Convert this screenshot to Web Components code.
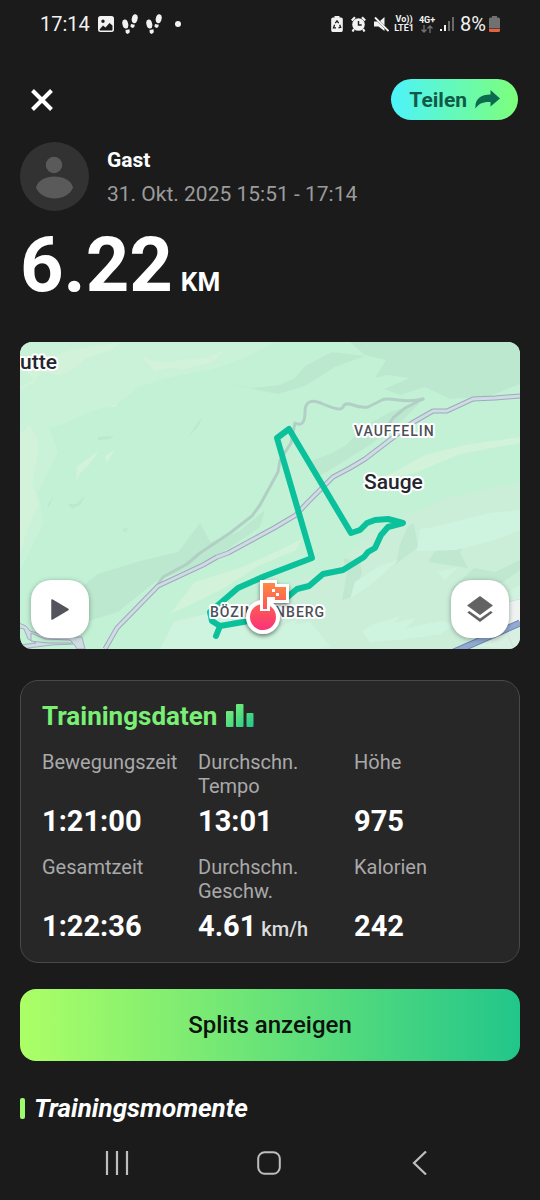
<!DOCTYPE html>
<html lang="de">
<head>
<meta charset="utf-8">
<meta name="viewport" content="width=device-width, initial-scale=1">
<title>Training</title>
<style>
body {
  background-color: #1b1b1b;
  color: #fff;
  font-family: Roboto, "Liberation Sans", sans-serif;
  margin: 0;
}
</style>
</head>
<body>
<workout-page></workout-page>

<script>
const icons = {
  image: [16, 16, `<path fill="#f2f2f2" fill-rule="evenodd" d="M2.5 0h11A2.5 2.5 0 0 1 16 2.500v11a2.500 2.500 0 0 1-2.500 2.500h-11A2.500 2.500 0 0 1 0 13.500v-11A2.500 2.500 0 0 1 2.500 0zM5 3.500a1.700 1.700 0 1 0 0 3.400 1.700 1.700 0 0 0 0-3.400zM1.500 13.500l.5 1h12l.5-1V9.500l-3-2.500-4 4.500L5 9.500z"/>`],
  steps: [16, 20, `<g fill="#f2f2f2"><ellipse cx="3.300" cy="10" rx="2.900" ry="4.600" transform="rotate(-12 3.300 10)"/><path d="M3.500 16l4-.8.3 3-2 1.700-2-1z"/><ellipse cx="12.700" cy="4.700" rx="2.900" ry="4.600" transform="rotate(12 12.700 4.700)"/><path d="M9 10l3.800.8-.6 2.500-2 .8-1.800-1.500z"/></g>`],
  dot: [6, 6, `<circle cx="3" cy="3" r="3" fill="#f2f2f2"/>`],
  saver: [12, 16, `<path fill="#f2f2f2" d="M3.500 0h5v1.500H10a1.800 1.800 0 0 1 1.800 1.800v11A1.700 1.700 0 0 1 10 16H2a1.700 1.700 0 0 1-1.800-1.700v-11A1.800 1.800 0 0 1 2 1.500h1.500z"/><path fill="none" stroke="#1b1b1b" stroke-width="1.300" d="M4.300 7.200L6 4.900l1.700 2.300M8.700 8.700l1 2.500-2.200.6M5 11.800H2.500l1.100-3"/>`],
  alarm: [15, 16, `<circle cx="7.500" cy="8.500" r="6.300" fill="#f2f2f2"/><path fill="none" stroke="#f2f2f2" stroke-width="2.200" d="M.8 4.500L4 1.300M14.200 4.500L11 1.300M3 13l-1.500 2.500M12 13l1.500 2.500"/><path fill="none" stroke="#1b1b1b" stroke-width="1.400" d="M7.500 5v4h3.200"/>`],
  mute: [15, 16, `<path fill="#f2f2f2" d="M10.500 1v8.500L6 5zM0 5.500h3.500l7 7V15L4.500 10.500H0z"/><path stroke="#f2f2f2" stroke-width="1.800" d="M1 1.500l13.500 13.500"/>`],
  arrows: [12, 8, `<path fill="none" stroke="#727272" stroke-width="1.300" d="M3 0v7M.5 4.500L3 7l2.500-2.500M9 8V1M6.500 3.500L9 1l2.500 2.500"/>`],
  signal: [15, 16, `<path fill="#f2f2f2" d="M0 13h2v2H0zM4 9h2v6H4z"/><path fill="#6a6a6a" d="M8 5h2v10H8zM12 1h2v14h-2z"/>`],
  battery: [11, 16, `<path fill="#717171" d="M3 0h5v1.500h1.500A1.500 1.500 0 0 1 11 3v9.500H0V3a1.500 1.500 0 0 1 1.500-1.500H3z"/><path fill="#e8603c" d="M0 13h11v1.500A1.500 1.500 0 0 1 9.500 16h-8A1.500 1.500 0 0 1 0 14.500z"/>`],
  close: [22, 22, `<path fill="none" stroke="#fff" stroke-width="4" d="M1.500 1.500l19 19M20.500 1.500l-19 19"/>`],
  share: [25, 19, `<path fill="#0c6b4f" d="M15.500 0L25 8.500l-9.500 8V12C8.500 11.500 3.500 13.500.5 18.500-.5 10 5 4.500 15.500 4.500z"/>`],
  avatar: [69, 69, `<circle cx="34.500" cy="34.500" r="34.500" fill="#323232"/><circle cx="34" cy="23" r="8.200" fill="#5a5a5a"/><path fill="#5a5a5a" d="M16 45.500C18 38 26 34.500 34.500 34.500S51 38 53 45.500C50 53 42 56.500 34.500 56.500S19 53 16 45.500z"/>`],
  play: [18, 21, `<path fill="#54545c" stroke="#54545c" stroke-width="1.500" stroke-linejoin="round" d="M1 1l16 9.500L1 20z"/>`],
  layers: [26, 26, `<path fill="#636363" d="M13 0l13 9.500L13 19 0 9.500zM2.300 15L13 22.500 23.700 15l2 1.500L13 26 .3 16.500z"/>`],
  bars: [28, 24, `<linearGradient id="g" x1="0" y1="0" x2="1" y2="1"><stop stop-color="#83f573"/><stop offset="1" stop-color="#22c68c"/></linearGradient><path fill="url(#g)" d="M1 7h5.500a1 1 0 0 1 1 1v14a1 1 0 0 1-1 1H1a1 1 0 0 1-1-1V8a1 1 0 0 1 1-1zM11 0h5.500a1 1 0 0 1 1 1v21a1 1 0 0 1-1 1H11a1 1 0 0 1-1-1V1a1 1 0 0 1 1-1zM21.500 9h5a1 1 0 0 1 1 1v12a1 1 0 0 1-1 1h-5a1 1 0 0 1-1-1V10a1 1 0 0 1 1-1z"/>`],
  recents: [24, 24, `<path stroke="#bebebe" stroke-width="2.200" d="M2 0v24M12 0v24M22 0v24"/>`],
  home: [24, 24, `<rect x="1.200" y="1.200" width="21.600" height="21.600" rx="6.500" fill="none" stroke="#bebebe" stroke-width="2"/>`],
  back: [24, 24, `<path fill="none" stroke="#bebebe" stroke-width="2.200" d="M18 .5L6 12l12 11.500"/>`]
};

class AppIcon extends HTMLElement {
  constructor () {
    super();
    this.attachShadow({ mode: 'open' });
  }

  connectedCallback() {
    const [w, h, shapes] = icons[this.getAttribute('name')];
    this.shadowRoot.innerHTML = `<style>
:host {
  display: block;
  flex: none;
}

svg {
  display: block;
}
</style>
<svg width="${w}" height="${h}" viewBox="0 0 ${w} ${h}" aria-hidden="true">${shapes}</svg>`;
  }
}

window.customElements.define('app-icon', AppIcon);

// Registers an element whose shadow root is a clone of static markup.
function define(name, html) {
  const template = document.createElement('template');
  template.innerHTML = html;
  window.customElements.define(name, class extends HTMLElement {
    constructor () {
      super();
      this.attachShadow({ mode: 'open' });
      this.shadowRoot.appendChild(template.content.cloneNode(true));
    }
  });
}

define('status-bar', `<style>
:host {
  align-items: center;
  color: #f2f2f2;
  display: flex;
  font-size: 20px;
  height: 48px;
  justify-content: space-between;
  padding: 0 40px;
}

.group {
  align-items: center;
  display: flex;
  gap: 8px;
}

.dot {
  margin-left: 5px;
}

.net {
  align-items: center;
  display: flex;
  flex-direction: column;
  font-size: 9px;
  font-weight: 700;
  line-height: 9px;
}

.right {
  gap: 5px;
}

.charge {
  align-items: center;
  display: flex;
  gap: 3px;
}
</style>
<div class="group">
  <span>17:14</span>
  <app-icon name="image"></app-icon>
  <app-icon name="steps"></app-icon>
  <app-icon name="steps"></app-icon>
  <app-icon class="dot" name="dot"></app-icon>
</div>
<div class="group right">
  <div class="group">
    <app-icon name="saver"></app-icon>
    <app-icon name="alarm"></app-icon>
    <app-icon name="mute"></app-icon>
  </div>
  <div class="net"><span>Vo))</span><span>LTE1</span></div>
  <div class="net"><span>4G+</span><app-icon name="arrows"></app-icon></div>
  <app-icon name="signal"></app-icon>
  <div class="charge"><span>8%</span><app-icon name="battery"></app-icon></div>
</div>`);

define('top-bar', `<style>
:host {
  align-items: center;
  display: flex;
  justify-content: space-between;
}

button {
  background: none;
  border: 0;
  color: inherit;
  font: inherit;
  margin: 0;
  padding: 0;
}

.close {
  padding: 9px 11px;
}

.share {
  align-items: center;
  background: linear-gradient(90deg, #4df3fa, #7dff7a);
  border-radius: 21px;
  color: #115a48;
  display: flex;
  font-size: 21px;
  font-weight: 700;
  gap: 8px;
  height: 41px;
  padding: 0 18px;
}
</style>
<button class="close" aria-label="Schließen"><app-icon name="close"></app-icon></button>
<button class="share">Teilen<app-icon name="share"></app-icon></button>`);

define('user-info', `<style>
:host {
  display: flex;
  gap: 18px;
}

.text {
  display: flex;
  flex-direction: column;
  gap: 10px;
  padding-top: 6px;
}

.name {
  font-size: 21px;
  font-weight: 700;
  line-height: 24px;
}

.date {
  color: #9b9b9b;
  font-size: 21px;
  line-height: 24px;
}
</style>
<app-icon name="avatar"></app-icon>
<div class="text">
  <div class="name"><slot></slot></div>
  <div class="date"><slot name="date"></slot></div>
</div>`);

define('workout-distance', `<style>
:host {
  align-items: baseline;
  display: flex;
  font-size: 76px;
  font-weight: 700;
  gap: 8px;
  line-height: 80px;
}

.unit {
  font-size: 26px;
}
</style>
<span><slot></slot></span>
<span class="unit"><slot name="unit"></slot></span>`);

define('route-map', `<style>
:host {
  border-radius: 12px;
  display: block;
  overflow: hidden;
  position: relative;
}

.map {
  display: block;
  height: auto;
  width: 100%;
}

text {
  fill: #4c4f58;
  font-size: 14px;
  font-weight: 500;
  letter-spacing: 1px;
  paint-order: stroke;
  stroke: #fff;
  stroke-linejoin: round;
  stroke-width: 4px;
}

.town {
  fill: #24262e;
  font-size: 21px;
  letter-spacing: normal;
}

button {
  align-items: center;
  background-color: #fff;
  border: 0;
  border-radius: 20px;
  bottom: 11px;
  box-shadow: 0 1px 5px rgba(0, 0, 0, .35);
  display: flex;
  height: 58px;
  justify-content: center;
  padding: 0;
  position: absolute;
  width: 58px;
}

.play {
  left: 11px;
}

.layers {
  right: 11px;
}
</style>
<svg class="map" viewBox="0 0 500 307" role="img" aria-label="Route">
  <defs>
    <linearGradient id="pin" x1="0" y1="238" x2="0" y2="290" gradientUnits="userSpaceOnUse">
      <stop stop-color="#ff8f3f" />
      <stop offset=".5" stop-color="#fb5b55" />
      <stop offset="1" stop-color="#fb2f7d" />
    </linearGradient>
    <filter id="shadow" x="-30%" y="-30%" width="160%" height="160%">
      <feDropShadow dx="0" dy="2" stdDeviation="2" flood-opacity=".5" />
    </filter>
  </defs>
  <rect width="500" height="307" fill="#c3f1d6" />
  <!-- meadows -->
  <g fill="#caf2d8">
    <path d="M0 0H255L225 16 190 28 150 35 118 45 100 60 70 70 40 83 0 90z" />
    <path d="M0 85L28 84 38 110 18 150 24 180 10 208 0 230z" />
  </g>
  <g fill="#d2f3d9">
    <path d="M0 45L14 38 6 30 22 18 50 9 78 3 100 1 92 8 66 16 52 28 38 33 22 30 12 42 0 47z" />
    <path d="M121 14L132 18 150 21 160 18 185 16 206 8 192 20 165 27 147 26 135 29z" />
    <path d="M0 92L10 83 17 97 18 110 12 142 19 162 8 185 2 205 0 210z" />
    <path d="M57 125L68 116 79 109 68 124 60 131 56 140zM85 114L94 108 87 121zM88 65l10-4-2 4z" />
    <path d="M372 131L405 113 445 103 500 95V101L440 112 395 131 350 140z" />
    <path d="M150 272L175 240 220 226 245 215 282 197 276 208 238 224 206 245 172 262z" />
  </g>
  <!-- hill shade -->
  <g fill="#bce8cf">
    <path d="M330 0H500V42L470 54 430 57 405 45 380 53 364 47 390 36 368 33 355 36 366 18 345 13z" />
    <path d="M206 41L232 46 260 43 275 36 285 24 312 10 345 14 315 25 285 44 258 52 238 48z" />
    <path d="M60 246L78 232 120 219 158 210 180 181 190 200 218 190 245 168 240 185 208 207 175 224 135 240 98 270 65 280z" />
    <path d="M325 104L345 84 370 70 400 61 384 77 350 103 318 123 296 136 288 120 310 112z" />
    <path d="M78 95l16-1-4 3-12 1zM168 95l11-16 4-3-6 10zM102 187l6-1-2 5z" />
    <path d="M28 162L34 154 28 166zM48 162l8 0 9-8-5 9-8 4z" />
  </g>
  <!-- southern slope -->
  <g fill="#cbeed9">
    <path d="M140 307L154 278 205 267 250 248 315 225 352 190 385 174 430 155 500 140V307z" />
  </g>
  <g fill="#c0e8d1">
    <path d="M380 202L388 184 394 181 398 205 376 222zM323 216L340 220 342 230 334 255 322 258 327 230z" />
    <path d="M415 209L443 190 447 200 440 210 448 226 408 220z" />
    <path d="M430 248L454 226 475 230 500 218V228L470 250z" />
  </g>
  <g fill="#cef4df">
    <path d="M400 187L414 185 470 171 500 168V188L475 198 436 208 397 209z" />
    <path d="M418 230L438 225 424 238zM342 289L355 282 380 274 374 281 396 276 385 287 420 279 438 282 420 292 380 298 350 300zM265 282l12-4-15 24zM335 240l25-16 18-6-24 22-24 17z" />
    <path d="M140 307L154 280 195 270 232 288 290 280 310 304 300 307z" />
    <path d="M458 268L500 243V281L450 302z" />
  </g>
  <path fill="#eef2f1" d="M484 262L500 256V280L480 290z" />
  <path fill="#d7f0e2" d="M450 304L500 285V307z" />
  <path fill="none" stroke="#d5dce5" d="M488 260L500 257M487 291L494 307" />
  <!-- minor road -->
  <g fill="none" stroke="#b2cfc6" stroke-width="3" stroke-linejoin="round" stroke-linecap="round">
    <path d="M403 57Q391 60 378 58T362 58L348 65Q341 66 333 63T323 65 303 62 285 70 275 81L271 101 260 118 258 130 240 163 232 174 210 191 180 211 167 222 143 235 136 245" />
    <path d="M403 57L385 66 373 76 363 91" />
  </g>
  <!-- main roads -->
  <g fill="none" stroke-linejoin="round">
    <path stroke="#9fa9bd" stroke-width="5" d="M500 54L475 56 453 57 427 69 413 69 392 81 366 101 345 117 330 126 313 135 288 160 276 173 254 186 208 211 197 215 183 223 138 244 97 286 85 307" />
    <path stroke="#cfdce3" stroke-width="3" d="M500 54L475 56 453 57 427 69 413 69 392 81 366 101 345 117 330 126 313 135 288 160 276 173 254 186 208 211 197 215 183 223 138 244 97 286 85 307" />
    <path fill="#cfdce3" stroke="#a3adc0" d="M-1 281L6 284 10 289 30 295 62 295 65 307H57L54 302 32 303 0 307 0 303 16 301 8 297 4 287 -1 286z" />
    <path fill="#c3f1d6" stroke="#a3adc0" d="M11 291L25 297 50 298 53 301 28 301 11 299z" />
    <path stroke="#6f86b2" stroke-width="7" d="M434 310L500 281" />
    <path stroke="#92aad0" stroke-width="5" d="M434 310L500 281" />
  </g>
  <text x="334" y="94">VAUFFELIN</text>
  <text class="town" x="344" y="147">Sauge</text>
  <text class="town" x="0" y="27">utte</text>
  <!-- recorded track -->
  <path fill="none" stroke="#0bc19c" stroke-width="6" stroke-linejoin="round" stroke-linecap="round" d="M196 294L200 284 192 279 190 270 218 246 245 234 292 216 257 96 269 87 331 191 340 188 347 181 355 178 368 177 383 181 368 185 361 193 355 206 348 210 344 215 323 228 303 232 289 244 277 247 264 258M200 284L223 280 243 276" />
  <text x="190" y="275">BÖZINGENBERG</text>
  <g filter="url(#shadow)">
    <circle cx="243" cy="275" r="17" fill="#fff" />
    <path fill="#fff" d="M240 238h17v4h12v19h-19v9h-10z" />
  </g>
  <circle cx="243" cy="275" r="13" fill="url(#pin)" />
  <path fill="#fff" d="M240 256h10v13h-10z" />
  <path fill="url(#pin)" d="M243 241h12v4h11v13h-11v-3h-8v12h-4z" />
  <path fill="#fff" d="M252 247h3v3h-3zM256 251h3v3h-3z" />
</svg>
<button class="play" aria-label="Abspielen"><app-icon name="play"></app-icon></button>
<button class="layers" aria-label="Ebenen"><app-icon name="layers"></app-icon></button>`);

define('stat-item', `<style>
:host {
  display: flex;
  flex-direction: column;
  gap: 6px;
}

.label {
  color: #a9a9a9;
  font-size: 20px;
  line-height: 24px;
  min-height: 48px;
}

.value {
  font-size: 29px;
  font-weight: 700;
  line-height: 34px;
}

::slotted([slot=unit]) {
  color: #dcdcdc;
  font-size: 20px;
  font-weight: 500;
  margin-left: 5px;
}
</style>
<div class="label"><slot name="label"></slot></div>
<div class="value"><slot></slot><slot name="unit"></slot></div>`);

define('data-card', `<style>
:host {
  background-color: #272727;
  border: 1px solid #48484f;
  border-radius: 18px;
  display: block;
  padding: 19px 9px 16px 21px;
}

h2 {
  align-items: center;
  color: #7bee76;
  display: flex;
  font-size: 26px;
  gap: 9px;
  line-height: 32px;
  margin: 0 0 18px;
}

.grid {
  display: grid;
  grid-template-columns: repeat(3, 1fr);
  row-gap: 17px;
}
</style>
<h2><slot name="title"></slot><app-icon name="bars"></app-icon></h2>
<div class="grid"><slot></slot></div>`);

define('gradient-button', `<style>
:host {
  display: block;
}

button {
  background: linear-gradient(90deg, #acff66, #22c68a);
  border: 0;
  border-radius: 16px;
  color: #0c120c;
  font: inherit;
  font-size: 24px;
  font-weight: 500;
  height: 72px;
  padding: 0;
  width: 100%;
}
</style>
<button><slot></slot></button>`);

define('section-title', `<style>
:host {
  align-items: center;
  display: flex;
  gap: 9px;
}

:host::before {
  background-color: #9dfa6c;
  border-radius: 2px;
  content: "";
  height: 21px;
  width: 5px;
}

h2 {
  font-size: 26px;
  font-style: italic;
  line-height: 32px;
  margin: 0;
}
</style>
<h2><slot></slot></h2>`);

define('nav-bar', `<style>
:host {
  display: flex;
  height: 74px;
  padding: 0 44px 0 41px;
}

button {
  align-items: center;
  background: none;
  border: 0;
  display: flex;
  flex: 1;
  justify-content: center;
  padding: 0;
}
</style>
<button aria-label="Letzte Apps"><app-icon name="recents"></app-icon></button>
<button aria-label="Startseite"><app-icon name="home"></app-icon></button>
<button aria-label="Zurück"><app-icon name="back"></app-icon></button>`);

define('workout-page', `<style>
:host {
  display: flex;
  flex-direction: column;
  min-height: 100vh;
}

main {
  display: flex;
  flex-direction: column;
  padding: 31px 20px 0;
}

top-bar {
  margin: 0 2px 22px 0;
}

workout-distance {
  margin: 14px 0 20px;
}

data-card {
  margin: 31px 0 26px;
}

section-title {
  margin-top: 31px;
}

nav-bar {
  margin-top: auto;
}
</style>
<status-bar></status-bar>
<main>
  <top-bar></top-bar>
  <user-info>Gast<span slot="date">31. Okt. 2025 15:51 - 17:14</span></user-info>
  <workout-distance>6.22<span slot="unit">KM</span></workout-distance>
  <route-map></route-map>
  <data-card>
    <span slot="title">Trainingsdaten</span>
    <stat-item><span slot="label">Bewegungszeit</span>1:21:00</stat-item>
    <stat-item><span slot="label">Durchschn.<br>Tempo</span>13:01</stat-item>
    <stat-item><span slot="label">Höhe</span>975</stat-item>
    <stat-item><span slot="label">Gesamtzeit</span>1:22:36</stat-item>
    <stat-item><span slot="label">Durchschn.<br>Geschw.</span>4.61<span slot="unit">km/h</span></stat-item>
    <stat-item><span slot="label">Kalorien</span>242</stat-item>
  </data-card>
  <gradient-button>Splits anzeigen</gradient-button>
  <section-title>Trainingsmomente</section-title>
</main>
<nav-bar></nav-bar>`);
</script>
</body>
</html>
